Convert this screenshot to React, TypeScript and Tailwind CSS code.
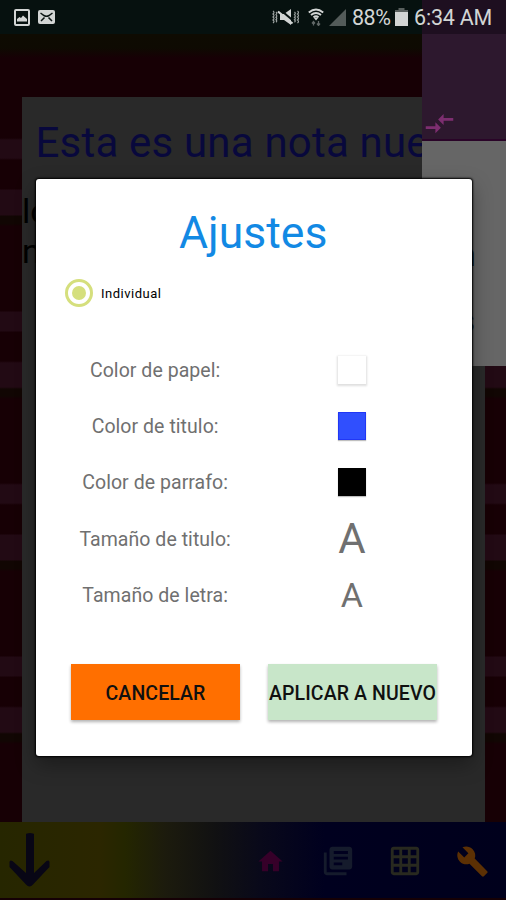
import type { ReactNode } from "react";
import {
  MdBuild,
  MdCompareArrows,
  MdGridOn,
  MdHome,
  MdLibraryBooks,
} from "react-icons/md";

const StatusBar = () => (
  <div className="absolute inset-x-0 top-0 z-20 flex h-[34px] items-center text-[#d2d5d4]">
    <svg className="ml-[14px] h-[17px] w-[16px]" viewBox="0 0 16 17">
      <rect x="1" y="1" width="14" height="15" rx="1" fill="none" stroke="currentColor" strokeWidth="2" />
      <path d="M3 12.500V10l2.500-2 1.500 1 2-2.500 4 3.500v2.500z" fill="currentColor" />
    </svg>
    <svg className="ml-[8px] h-[14px] w-[17px]" viewBox="0 0 17 14">
      <rect width="17" height="14" rx="2" fill="currentColor" />
      <path
        d="M2.500 3 6 5.500q2.500 1.500 5 0L14.500 3M3 11l3.500-3.500M14 11l-3.500-3.500"
        fill="none"
        stroke="#0b1513"
        strokeWidth="1.500"
      />
    </svg>
    <svg className="ml-[217px] h-[18px] w-[27px] shrink-0" viewBox="0 0 27 18">
      <path d="M8 6h4l7-5v16l-7-5H8z" fill="currentColor" />
      <path d="m8 1.500 13 11" stroke="#06110f" strokeWidth="2" />
      <path d="m6 3.500 14.500 12" stroke="currentColor" strokeWidth="2.200" />
      <path
        d="M1 3q2 1.500 0 3 2 1.500 0 3 2 1.500 0 3 2 1.500 0 3M4 4q1.500 1.300 0 2.600 1.500 1.300 0 2.600 1.500 1.300 0 2.600 1.500 1.300 0 2.400M22.500 4q1.500 1.300 0 2.600 1.500 1.300 0 2.600 1.500 1.300 0 2.600 1.500 1.300 0 2.400M25.500 3q2 1.500 0 3 2 1.500 0 3 2 1.500 0 3 2 1.500 0 3"
        fill="none"
        stroke="currentColor"
        strokeWidth="1.200"
        opacity=".75"
      />
    </svg>
    <svg className="ml-[9px] h-[18px] w-[16px] shrink-0" viewBox="0 0 16 18" fill="none" stroke="currentColor">
      <path d="M.8 4.500q7.200-6 14.400 0M3 7q5-4 10 0M5.500 9.300q2.500-2 5 0" strokeWidth="1.900" />
      <path d="m5.500 9.500 2.500 3 2.500-3z" fill="currentColor" stroke="none" />
      <path d="M5.500 17.500v-4m-1.500 2 1.500-2 1.500 2M10.500 13v4.500M9 15.500l1.500 2 1.500-2" strokeWidth="1.300" opacity=".45" />
    </svg>
    <svg className="ml-[5px] h-[17px] w-[17px] shrink-0 text-[#535b59]" viewBox="0 0 17 17">
      <path d="M17 0v17H0z" fill="currentColor" />
    </svg>
    <span className="ml-[6px] w-[39px] whitespace-nowrap pt-[2px] text-[21.500px] leading-[32px] tracking-[-0.5px]">88%</span>
    <svg className="ml-[4px] h-[18px] w-[13px] shrink-0" viewBox="0 0 13 18">
      <path d="M3.500 0h6v2H13v3H0V2h3.500z" fill="#59605e" />
      <path d="M0 4h13v14H0z" fill="currentColor" />
    </svg>
    <span className="ml-[6px] whitespace-nowrap pt-[2px] text-[21.500px] leading-[32px] tracking-[-0.200px]">6:34 AM</span>
  </div>
);

const SideDrawer = () => (
  <div className="absolute right-0 top-0 z-10 h-[366px] w-[84px] bg-[#666]">
    <div className="h-[34px] bg-[#1e0f20]" />
    <div className="flex h-[107px] items-end border-b-2 border-[#2a0428] bg-[#2d182e] pl-[1px] text-[#7d2e70]">
      <MdCompareArrows className="-mb-[1px] size-[33px]" />
    </div>
  </div>
);

const BottomBar = () => (
  <div className="flex h-[78px] items-center border-b-2 border-[#150005] bg-[linear-gradient(90deg,#262600_0,#2b2600_100px,#242600_125px,#1c1b0d_165px,#111112_215px,#09091a_260px,#00001f_325px,#00001c_100%)]">
    <svg className="ml-[9px] h-[55px] w-[41px] text-[#080615]" viewBox="0 0 41 55">
      <path d="M17 1.500q0-1.500 4-1.500t4 1.500V40L37.500 28q3-1.500 3 1.500v4.500L24 51.500q-3.500 4-7 0L.5 34v-4.500q0-3 3-1.500L17 40z" fill="currentColor" />
    </svg>
    <MdHome className="ml-[206px] mt-[2px] size-[29px] text-[#360029]" />
    <MdLibraryBooks className="ml-[36px] mt-[2px] size-[34px] text-[#151b2c]" />
    <MdGridOn className="ml-[33px] mt-[2px] size-[34px] text-[#28291f]" />
    <MdBuild className="ml-[34px] mt-[2px] size-[33px] text-[#5c3004]" />
  </div>
);

const SettingRow = ({ label, children }: { label: string; children: ReactNode }) => (
  <div className="grid h-[56.200px] grid-cols-2 items-center justify-items-center">
    <span className="pl-[1px] pt-[1px] text-[19.500px] tracking-[0.050px] text-[#707070]">{label}</span>
    {children}
  </div>
);

const SettingsDialog = () => (
  <div className="absolute left-[36px] top-[179px] z-30 h-[577px] w-[435.500px] rounded-[3px] bg-white pl-5 pr-[21px] shadow-[0_0_2px_1px_#000,0_8px_20px_rgba(0,0,0,0.35)]">
    <h1 className="pt-[26px] text-center text-[44.500px] leading-[56px] text-[#1289e4]">Ajustes</h1>
    <label className="ml-[9px] mt-[18px] flex h-[28px] items-center gap-[8px] text-[13px] tracking-[0.500px] text-black">
      <span className="flex size-[28px] items-center justify-center rounded-full border-[3px] border-[#d5df7d]">
        <span className="size-[14px] rounded-full bg-[#d5df7d]" />
      </span>
      <span className="pt-[2px]">Individual</span>
    </label>
    <div className="mt-[35px]">
      <SettingRow label="Color de papel:">
        <span className="size-[28px] bg-white shadow-[0_1px_2px_1px_rgba(0,0,0,0.13)]" />
      </SettingRow>
      <SettingRow label="Color de titulo:">
        <span className="size-[28px] border border-[#2137f5] bg-[#304ffe] shadow-[0_1px_1px_rgba(0,0,0,0.25)]" />
      </SettingRow>
      <SettingRow label="Color de parrafo:">
        <span className="size-[28px] bg-black shadow-[0_1px_1px_rgba(0,0,0,0.25)]" />
      </SettingRow>
      <SettingRow label="Tamaño de titulo:">
        <span className="text-[42px] leading-[56px] text-[#707070]">A</span>
      </SettingRow>
      <SettingRow label="Tamaño de letra:">
        <span className="text-[34px] leading-[56px] text-[#707070]">A</span>
      </SettingRow>
    </div>
    <div className="mt-[41px] flex gap-[28px] pl-[15px] text-[19.500px] font-medium text-[#101010]">
      <button className="h-[56px] w-[169px] bg-[#ff6f00] pt-[3px] tracking-[0.100px] shadow-[0_2px_3px_rgba(0,0,0,0.3)]">
        CANCELAR
      </button>
      <button className="flex h-[56px] w-[169px] items-center justify-center whitespace-nowrap bg-[#c8e6c9] pt-[3px] tracking-[0.100px] shadow-[0_2px_3px_rgba(0,0,0,0.3)]">
        APLICAR A NUEVO
      </button>
    </div>
  </div>
);

export default function App() {
  return (
    <div className="relative flex h-[900px] w-[506px] flex-col overflow-hidden bg-[repeating-linear-gradient(180deg,#170005_0,#170005_16px,#220a14_18px,#220a14_42px,#110603_44px,#110603_51px,#170005_54px,#170005_138px,#220a14_140px,#220a14_158px,#170005_160px,#170005_172.500px)] font-['Roboto',sans-serif]">
      <StatusBar />
      <div className="h-[34px] shrink-0 bg-[#06110f]" />
      <div className="h-[63px] shrink-0 bg-[linear-gradient(180deg,#0e0b02_0,#0e0a02_14px,#170005_24px)]" />
      <div className="ml-[22px] w-[463px] flex-1 overflow-hidden bg-[#292929]">
        <h2 className="whitespace-nowrap pl-[13.500px] pt-[18px] text-[42px] leading-[56px] tracking-[0.200px] text-[#08083c]">
          Esta es una nota nueva
        </h2>
        <div className="mt-[20px] text-[34px] leading-[40px] text-black">
          <p>lo</p>
          <p>n</p>
        </div>
      </div>
      <BottomBar />
      <SideDrawer />
      <div className="absolute left-[457px] top-[234px] z-20 text-[34px] leading-[40px] text-black">n</div>
      <div className="absolute left-[457.500px] top-[300px] z-20 text-[34px] leading-[40px] text-black">s</div>
      <SettingsDialog />
    </div>
  );
}
